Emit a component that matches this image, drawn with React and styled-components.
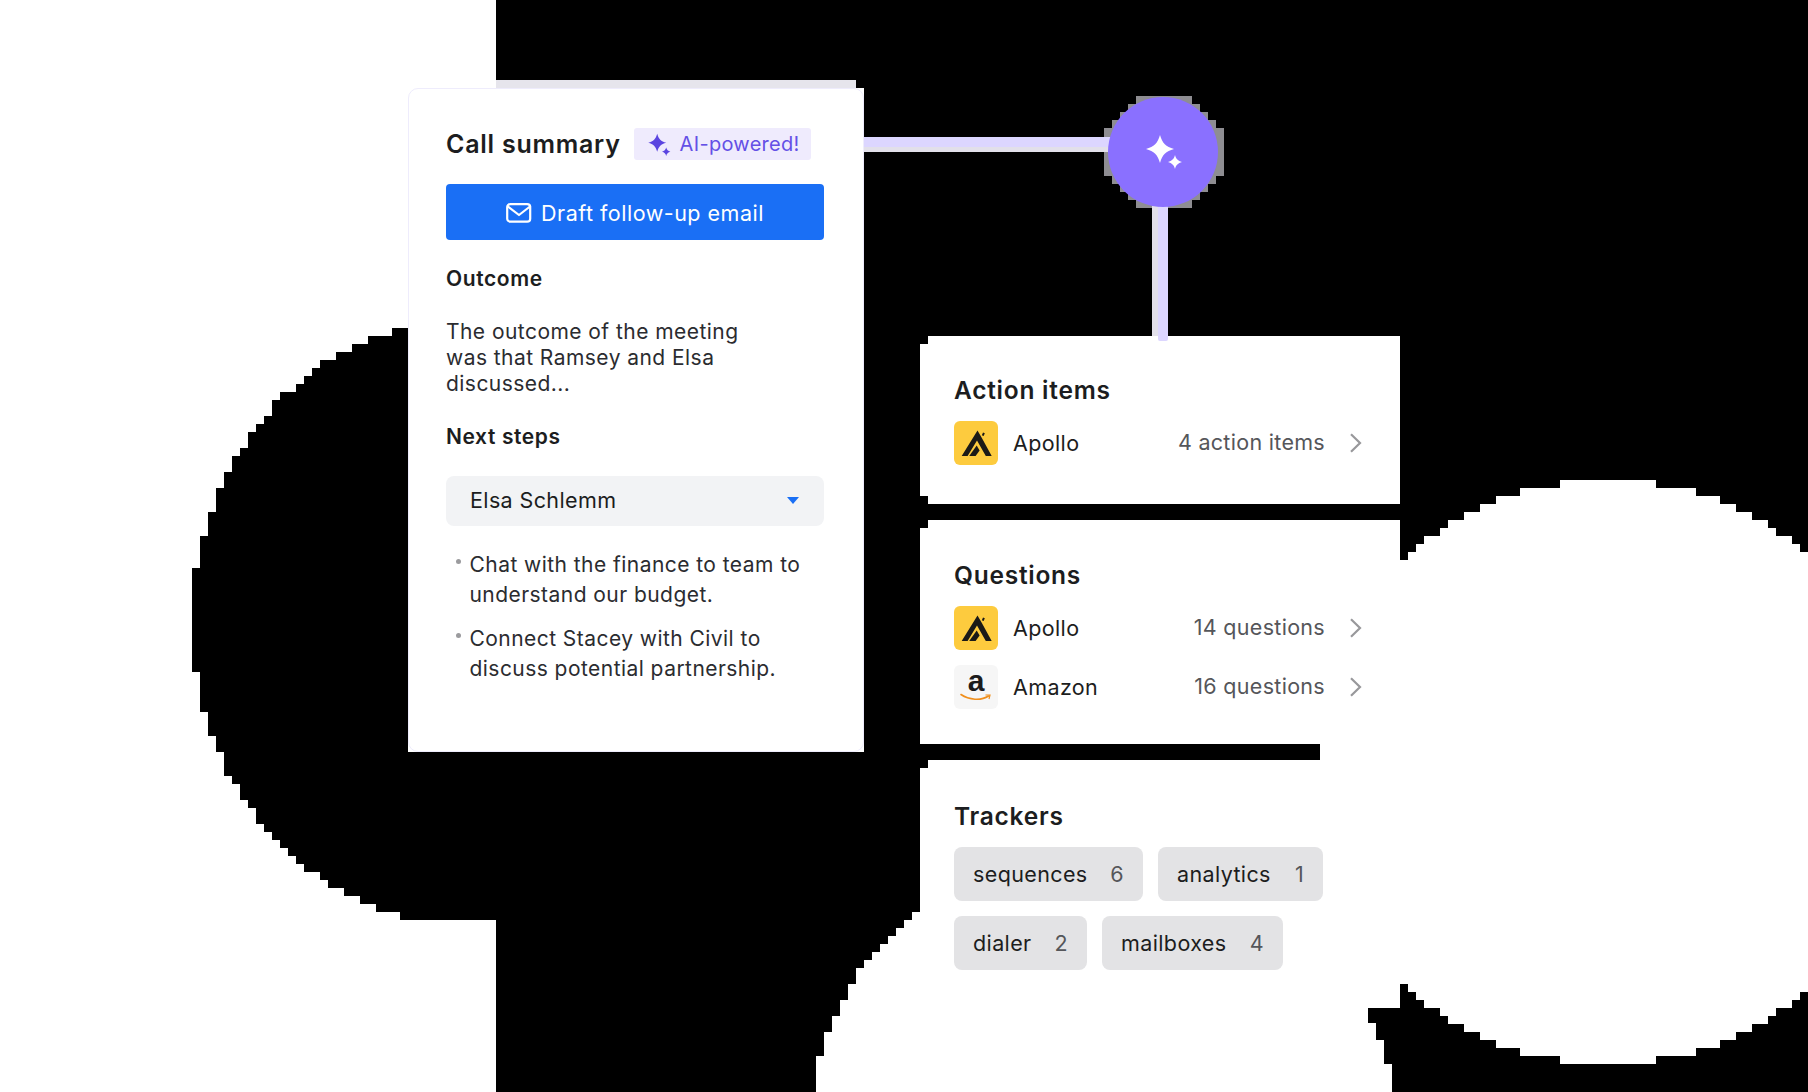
import React from 'react';
import styled, { createGlobalStyle } from 'styled-components';

const GlobalStyle = createGlobalStyle`
  html, body { margin: 0; padding: 0; background: #fff; }
  body { font-family: Inter, "Liberation Sans", sans-serif; color: #1d1e21; }
`;

const colors = {
  blue: '#1a6ff5',
  violet: '#8a70ff',
  ink: '#1c1d20',
  body: '#2b2c30',
  muted: '#55565a',
  line: '#dcd6ff',
  lineShade: '#e2e0ea',
};

// background blobs are blocky, so snap every row of an ellipse to a coarse grid
function blockyEllipse(cx, cy, rx, ry, gx, gy, x0, y0) {
  let d = '';
  const first = y0 - Math.ceil((y0 - (cy - ry)) / gy) * gy;
  for (let y = first; y < cy + ry; y += gy) {
    const t = (y + gy / 2 - cy) / ry;
    if (Math.abs(t) >= 1) continue;
    const half = rx * Math.sqrt(1 - t * t);
    const left = x0 + Math.round((cx - half - x0) / gx) * gx;
    const right = x0 + Math.round((cx + half - x0) / gx) * gx;
    d += `M${left} ${y}H${right}V${y + gy}H${left}Z`;
  }
  return d;
}

const bottomBlob = [
  [920, 912], [912, 912], [912, 920], [904, 920], [904, 928], [896, 928], [896, 936], [888, 936],
  [888, 944], [880, 944], [880, 952], [872, 952], [872, 960], [864, 960], [864, 968], [856, 968],
  [856, 984], [848, 984], [848, 1000], [840, 1000], [840, 1016], [832, 1016], [832, 1032], [824, 1032],
  [824, 1056], [816, 1056], [816, 1092], [1392, 1092], [1392, 1064], [1384, 1064], [1384, 1040],
  [1376, 1040], [1376, 1023], [1368, 1023], [1368, 912],
].map(p => p.join(',')).join(' ');

const Page = styled.div`
  position: relative;
  width: 1808px;
  height: 1092px;
  overflow: hidden;
  display: flex;
  align-items: flex-start;
  padding: 88px 0 0 408px;
  box-sizing: border-box;
`;

const Backdrop = styled.svg`
  position: absolute;
  inset: 0;
  z-index: 0;
`;

const SummaryCard = styled.section`
  position: relative;
  z-index: 1;
  width: 456px;
  height: 664px;
  flex: none;
  background: #fff;
`;

const SummaryInner = styled.div`
  height: 100%;
  box-sizing: border-box;
  border: 1.5px solid #eeecfc;
  border-radius: 10px;
  padding: 38px 38px 0 37px;
`;

const TitleRow = styled.div`
  display: flex;
  align-items: center;
  gap: 13px;
  height: 34px;
`;

const CardTitle = styled.h2`
  margin: 0;
  font-size: 25px;
  line-height: 34px;
  font-weight: 600;
  letter-spacing: 0.75px;
  color: ${colors.ink};
`;

const AiBadge = styled.span`
  display: inline-flex;
  align-items: center;
  gap: 9px;
  width: 177px;
  height: 32px;
  box-sizing: border-box;
  padding-left: 13px;
  border-radius: 3px;
  background: #efebfd;
  color: #6450e6;
  font-size: 20px;
  letter-spacing: 0.3px;
`;

const DraftButton = styled.button`
  display: flex;
  align-items: center;
  justify-content: center;
  gap: 9px;
  width: 378px;
  height: 56px;
  margin-top: 23px;
  padding: 2px 0 0;
  border: none;
  border-radius: 4px;
  background: ${colors.blue};
  color: #fff;
  font: 400 21.5px Inter, sans-serif;
  letter-spacing: 0.5px;
`;

const SectionLabel = styled.h3`
  margin: ${props => props.top}px 0 0;
  font-size: 21px;
  line-height: 26px;
  font-weight: 600;
  letter-spacing: 0.6px;
  color: ${colors.ink};
`;

const Paragraph = styled.p`
  margin: 27px 0 0;
  width: 330px;
  font-size: 21px;
  line-height: 26px;
  letter-spacing: 0.45px;
  color: ${colors.body};
`;

const PersonSelect = styled.div`
  display: flex;
  align-items: center;
  justify-content: space-between;
  width: 378px;
  height: 50px;
  margin-top: 26px;
  box-sizing: border-box;
  padding: 0 25px 2px 24px;
  border-radius: 8px;
  background: #f2f3f5;
  font-size: 21.5px;
  letter-spacing: 0.38px;
  color: ${colors.ink};
`;

const Caret = styled.span`
  width: 0;
  height: 0;
  border-left: 6.5px solid transparent;
  border-right: 6.5px solid transparent;
  border-top: 7px solid ${colors.blue};
`;

const StepList = styled.ul`
  list-style: none;
  margin: 24px 0 0;
  padding: 0 0 0 23.5px;
  display: flex;
  flex-direction: column;
  gap: 14px;
`;

const StepItem = styled.li`
  position: relative;
  font-size: 21px;
  line-height: 30px;
  letter-spacing: 0.45px;
  color: ${colors.body};

  &::before {
    content: '';
    position: absolute;
    left: -14px;
    top: 9px;
    width: 5px;
    height: 5px;
    border-radius: 50%;
    background: #9b9b9e;
  }
`;

const InsightColumn = styled.div`
  position: relative;
  z-index: 1;
  width: 480px;
  flex: none;
  margin: 248px 0 0 56px;
  display: flex;
  flex-direction: column;
  gap: 16px;
`;

const Panel = styled.section`
  position: relative;
  box-sizing: border-box;
  height: ${props => props.h}px;
  padding: ${props => props.pad}px 38px 0 34px;
  background: #fff;

  &::before {
    content: '';
    position: absolute;
    left: 0;
    top: 0;
    width: 8px;
    height: 8px;
    background: #000;
  }

  &::after {
    content: '';
    display: ${props => (props.$notchBottom ? 'block' : 'none')};
    position: absolute;
    left: 0;
    bottom: 0;
    width: 8px;
    height: 8px;
    background: #000;
  }
`;

const PanelTitle = styled.h3`
  margin: 0 0 16px;
  font-size: 24.5px;
  line-height: 30px;
  font-weight: 600;
  letter-spacing: 0.75px;
  color: ${colors.ink};
`;

const SourceRow = styled.div`
  display: flex;
  align-items: center;
  height: 44px;
  margin-bottom: 15px;
`;

const LogoTile = styled.span`
  width: 44px;
  height: 44px;
  flex: none;
  border-radius: 6px;
  background: ${props => props.$bg};
  display: flex;
  flex-direction: column;
  align-items: center;
  justify-content: center;
`;

const AmazonLetter = styled.span`
  font: 700 30px/24px "Liberation Sans", sans-serif;
  color: #1c1c1c;
  margin-top: -3px;
`;

const SourceName = styled.span`
  margin-left: 15px;
  font-size: 21.5px;
  letter-spacing: 0.38px;
  color: ${colors.ink};
`;

const SourceCount = styled.span`
  margin: 0 25px 2px auto;
  font-size: 21.5px;
  letter-spacing: 0.3px;
  color: ${colors.muted};
`;

const ChipWrap = styled.div`
  display: flex;
  flex-wrap: wrap;
  gap: 15px;
  width: 380px;
`;

const Chip = styled.span`
  display: inline-flex;
  align-items: center;
  justify-content: space-between;
  height: 54px;
  box-sizing: border-box;
  width: ${props => props.w}px;
  padding: 0 19px 0 19px;
  border-radius: 8px;
  background: #e3e3e5;
  font-size: 21.5px;
  letter-spacing: 0.38px;
  color: ${colors.ink};
`;

const ChipCount = styled.span`
  color: ${colors.muted};
`;

const Connector = styled.div`
  position: absolute;
  z-index: 2;
  left: ${props => props.x}px;
  top: ${props => props.y}px;
  width: ${props => props.w}px;
  height: ${props => props.h}px;
  background: ${props => props.$bg};
  border-radius: ${props => props.$round || 0}px;
`;

const Hub = styled.div`
  position: absolute;
  z-index: 3;
  left: 1108px;
  top: 97px;
  width: 110px;
  height: 110px;
  border-radius: 50%;
  background: ${colors.violet};
  display: flex;
  align-items: center;
  justify-content: center;
`;

const star = (cx, cy, r) => {
  const p = (x, y) => `${cx + x * r} ${cy + y * r}`;
  return `M${p(0, -1)}C${p(0.16, -0.42)} ${p(0.42, -0.16)} ${p(1, 0)}C${p(0.42, 0.16)} ${p(0.16, 0.42)} ${p(0, 1)}C${p(-0.16, 0.42)} ${p(-0.42, 0.16)} ${p(-1, 0)}C${p(-0.42, -0.16)} ${p(-0.16, -0.42)} ${p(0, -1)}Z`;
};

const Sparkles = ({ size, color, big, small }) => (
  <svg width={size} height={size} viewBox="0 0 40 40" fill={color}>
    <path d={star(big[0], big[1], big[2])} />
    <path d={star(small[0], small[1], small[2])} />
  </svg>
);

const MailIcon = () => (
  <svg width="26" height="20" viewBox="0 0 26 20" fill="none" stroke="#fff" strokeWidth="2.2" strokeLinejoin="round" strokeLinecap="round">
    <rect x="1.2" y="1.2" width="23" height="17.5" rx="3" />
    <path d="M2 3.5 13 12 24 3.5" />
  </svg>
);

const Chevron = () => (
  <svg width="12" height="20" viewBox="0 0 12 20" fill="none" stroke="#98989b" strokeWidth="2.2" strokeLinecap="square" style={{ flex: 'none' }}>
    <path d="M1.8 2 10 10 1.8 18" />
  </svg>
);

const ApolloLogo = () => (
  <LogoTile $bg="#fdcb3e">
    <svg width="44" height="44" viewBox="0 0 44 44" fill="#1b1a17">
      <path d="M23.5 9.5 28 17.2 37.7 35H31.8L23 19.5 13.6 35H7.7Z" />
      <path d="M22.7 24.5 25.6 29.5 21.6 35H15.2Z" />
      <path d="M26.5 30.5 29.5 35H23.5Z" fill="#fdcb3e" />
      <path d="M29 11.5 30.8 12.3 29.6 15 27.8 14.2Z" />
    </svg>
  </LogoTile>
);

const AmazonLogo = () => (
  <LogoTile $bg="#f6f6f6">
    <AmazonLetter>a</AmazonLetter>
    <svg width="32" height="9" viewBox="0 0 32 9" fill="none">
      <path d="M1 1.5C9 7 21 8 28.5 3" stroke="#f08f1c" strokeWidth="1.6" strokeLinecap="round" />
      <path d="M25.5 2 30 2 29 6" stroke="#f08f1c" strokeWidth="1.2" />
    </svg>
  </LogoTile>
);

const Source = ({ logo, name, count }) => (
  <SourceRow>
    {logo}
    <SourceName>{name}</SourceName>
    <SourceCount>{count}</SourceCount>
    <Chevron />
  </SourceRow>
);

export default function App() {
  return (
    <Page>
      <GlobalStyle />
      <Backdrop width="1808" height="1092" viewBox="0 0 1808 1092" shapeRendering="crispEdges">
        <rect x="496" y="0" width="1312" height="1092" fill="#000" />
        <path d={blockyEllipse(464, 622, 272, 302, 8, 8, 192, 560)} fill="#000" />
        <path d={blockyEllipse(1608, 772, 300, 292, 8, 8, 192, 480)} fill="#fff" />
        <polygon points={bottomBlob} fill="#fff" />
        <rect x="920" y="744" width="400" height="16" fill="#000" />
        <rect x="1320" y="744" width="100" height="16" fill="#fff" />
        <rect x="496" y="80" width="360" height="8" fill="#e6e5ec" />
        <path d={blockyEllipse(1164, 152, 60, 57, 8, 8, 192, 96)} fill="#8e8d92" />
      </Backdrop>

      <SummaryCard>
        <SummaryInner>
          <TitleRow>
            <CardTitle>Call summary</CardTitle>
            <AiBadge>
              <Sparkles size={24} color="#5b45e0" big={[17, 18, 15]} small={[32, 33, 7]} />
              AI-powered!
            </AiBadge>
          </TitleRow>
          <DraftButton>
            <MailIcon />
            Draft follow-up email
          </DraftButton>
          <SectionLabel top={26}>Outcome</SectionLabel>
          <Paragraph>The outcome of the meeting was that Ramsey and Elsa discussed...</Paragraph>
          <SectionLabel top={27}>Next steps</SectionLabel>
          <PersonSelect>
            Elsa Schlemm
            <Caret />
          </PersonSelect>
          <StepList>
            <StepItem>Chat with the finance to team to understand our budget.</StepItem>
            <StepItem>Connect Stacey with Civil to discuss potential partnership.</StepItem>
          </StepList>
        </SummaryInner>
      </SummaryCard>

      <InsightColumn>
        <Panel h={168} pad={39} $notchBottom>
          <PanelTitle>Action items</PanelTitle>
          <Source logo={<ApolloLogo />} name="Apollo" count="4 action items" />
        </Panel>
        <Panel h={224} pad={40}>
          <PanelTitle>Questions</PanelTitle>
          <Source logo={<ApolloLogo />} name="Apollo" count="14 questions" />
          <Source logo={<AmazonLogo />} name="Amazon" count="16 questions" />
        </Panel>
        <Panel h={248} pad={41}>
          <PanelTitle>Trackers</PanelTitle>
          <ChipWrap>
            <Chip w={189}>sequences<ChipCount>6</ChipCount></Chip>
            <Chip w={165}>analytics<ChipCount>1</ChipCount></Chip>
            <Chip w={133}>dialer<ChipCount>2</ChipCount></Chip>
            <Chip w={181}>mailboxes<ChipCount>4</ChipCount></Chip>
          </ChipWrap>
        </Panel>
      </InsightColumn>

      <Connector x={864} y={137} w={250} h={10} $bg={colors.line} />
      <Connector x={864} y={147} w={250} h={5} $bg={colors.lineShade} />
      <Connector x={1152} y={205} w={6} h={131} $bg={colors.lineShade} />
      <Connector x={1158} y={205} w={10} h={136} $bg={colors.line} $round={2} />
      <Hub>
        <Sparkles size={40} color="#fff" big={[17, 17, 14]} small={[32, 30, 7]} />
      </Hub>
    </Page>
  );
}
